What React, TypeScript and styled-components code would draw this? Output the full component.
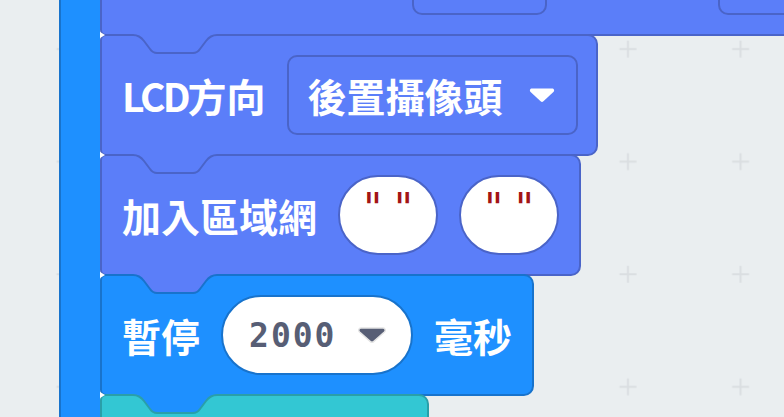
import React from "react";
import styled, { createGlobalStyle } from "styled-components";

const C = {
  bg: "#eaeef0",
  grid: "#dadee1",
  purple: "#5b7ef9",
  purpleDark: "#4a64c8",
  blue: "#1e90ff",
  blueDark: "#1873cc",
  teal: "#33c7d3",
  tealDark: "#2a9fa9",
  text: "#575e75",
  quote: "#a31515",
};

const GlobalStyle = createGlobalStyle`
  html, body { margin: 0; padding: 0; background: ${C.bg}; }
  body { font-family: "Noto Sans CJK TC", "Noto Sans", sans-serif; }
`;

const Workspace = styled.div`
  position: relative;
  width: 784px;
  height: 417px;
  overflow: hidden;
  background: ${C.bg};
`;

const GridLayer = styled.svg`
  position: absolute;
  inset: 0;
  width: 100%;
  height: 100%;
`;

/* the scrolled block canvas */
const Canvas = styled.div`
  position: relative;
  display: flex;
  padding-left: 59px;
  margin-top: -84px;
`;

const CBlock = styled.div`
  display: flex;
  align-items: stretch;
`;

const Arm = styled.div`
  flex: none;
  box-sizing: border-box;
  width: 41px;
  background: ${C.blue};
  border-left: 2px solid ${C.blueDark};
`;

const Statements = styled.div`
  display: flex;
  flex-direction: column;
  align-items: flex-start;
`;

const Block = styled.div<{
  $fill: string;
  $stroke: string;
  $width: number;
  $lead?: number;
  $gap?: number;
}>`
  position: relative;
  flex: none;
  box-sizing: border-box;
  width: ${(p) => p.$width}px;
  height: 122px;
  margin-top: -2px;
  display: flex;
  align-items: center;
  gap: ${(p) => p.$gap ?? 21}px;
  padding-left: ${(p) => p.$lead ?? 20}px;
  background: ${(p) => p.$fill};
  border: 2px solid ${(p) => p.$stroke};
  border-radius: 6px 10px 10px 6px;
`;

const NotchSvg = styled.svg`
  position: absolute;
  left: -2px;
  top: -6px;
  width: 130px;
  height: 30px;
  overflow: visible;
  pointer-events: none;
`;

const Label = styled.span`
  font: 700 39px "Noto Sans CJK TC", "Noto Sans", sans-serif;
  color: #ffffff;
  line-height: 1;
  white-space: nowrap;
`;

const Latin = styled.span`
  letter-spacing: -3px;
`;

const Dropdown = styled.div<{ $stroke: string; $width: number }>`
  flex: none;
  box-sizing: border-box;
  width: ${(p) => p.$width}px;
  height: 80px;
  border: 2px solid ${(p) => p.$stroke};
  border-radius: 10px;
  display: flex;
  align-items: center;
  justify-content: space-between;
  padding: 0 21px 0 19px;
`;

const Pill = styled.div<{ $stroke: string; $width: number }>`
  flex: none;
  box-sizing: border-box;
  width: ${(p) => p.$width}px;
  height: 80px;
  border-radius: 40px;
  background: #ffffff;
  border: 2px solid ${(p) => p.$stroke};
  display: flex;
  align-items: center;
`;

const StringPill = styled(Pill)`
  align-items: flex-start;
  justify-content: center;
  padding-top: 11px;
  gap: 12px;
`;

const NumberPill = styled(Pill)`
  padding-left: 26px;
  gap: 20px;
`;

const Quote = styled.span`
  font: 400 41px "DejaVu Sans", sans-serif;
  color: ${C.quote};
  line-height: 1;
`;

const NumberText = styled.span`
  font: 700 33px "DejaVu Sans Mono", monospace;
  letter-spacing: 2px;
  color: ${C.text};
  line-height: 1;
`;

const ArrowSvg = styled.svg`
  flex: none;
  display: block;
`;

const NOTCH =
  "M33,5 C38,5 41,7 44,11 L50,19 C52,22 54,23 57,23 L93,23 C96,23 98,22 100,19 L106,11 C109,7 112,5 117,5";

function Notch({ prevFill, stroke }: { prevFill: string; stroke: string }) {
  return (
    <NotchSvg viewBox="0 0 130 30">
      <path d={NOTCH + " L117,4 L33,4 Z"} fill={prevFill} />
      <path d={NOTCH} fill="none" stroke={stroke} strokeWidth={2} />
      <path d="M0,2 L5,5 L0,8 Z" fill="#ffffff" />
    </NotchSvg>
  );
}

function WhiteArrow() {
  return (
    <ArrowSvg width="26" height="16" viewBox="0 0 26 16">
      <path
        d="M3 1.5 H23 C25 1.5 25.8 3.6 24.4 5 L14.4 14.2 C13.4 15.1 12.6 15.1 11.6 14.2 L1.6 5 C0.2 3.6 1 1.5 3 1.5 Z"
        fill="#ffffff"
      />
    </ArrowSvg>
  );
}

function DarkArrow() {
  return (
    <ArrowSvg width="30" height="18" viewBox="0 0 30 18">
      <path
        d="M4 2 H26 C28.2 2 29 4.4 27.4 6 L16.6 15.6 C15.6 16.5 14.4 16.5 13.4 15.6 L2.6 6 C1 4.4 1.8 2 4 2 Z"
        fill={C.text}
        stroke="#e4e4e4"
        strokeWidth={1.5}
      />
    </ArrowSvg>
  );
}

function EmptyString() {
  return (
    <StringPill $stroke={C.purpleDark} $width={100}>
      <Quote>"</Quote>
      <Quote>"</Quote>
    </StringPill>
  );
}

export default function App() {
  return (
    <>
      <GlobalStyle />
      <Workspace>
        <GridLayer>
          <defs>
            <pattern
              id="ws-grid"
              width="112.6"
              height="112.6"
              patternUnits="userSpaceOnUse"
            >
              <path
                d="M56.5,49 H73.5 M65,40.5 V57.5"
                stroke={C.grid}
                strokeWidth={2}
                fill="none"
              />
            </pattern>
          </defs>
          <rect width="100%" height="100%" fill="url(#ws-grid)" />
        </GridLayer>

        <Canvas>
          <CBlock>
            <Arm />
            <Statements>
              <Block
                $fill={C.purple}
                $stroke={C.purpleDark}
                $width={800}
                $lead={310}
                $gap={171}
              >
                <Dropdown $stroke={C.purpleDark} $width={135} />
                <Dropdown $stroke={C.purpleDark} $width={200} />
              </Block>

              <Block $fill={C.purple} $stroke={C.purpleDark} $width={498}>
                <Notch prevFill={C.purple} stroke={C.purpleDark} />
                <Label>
                  <Latin>LCD</Latin>方向
                </Label>
                <Dropdown $stroke={C.purpleDark} $width={291}>
                  <Label>後置攝像頭</Label>
                  <WhiteArrow />
                </Dropdown>
              </Block>

              <Block $fill={C.purple} $stroke={C.purpleDark} $width={481}>
                <Notch prevFill={C.purple} stroke={C.purpleDark} />
                <Label>加入區域網</Label>
                <EmptyString />
                <EmptyString />
              </Block>

              <Block $fill={C.blue} $stroke={C.blueDark} $width={434}>
                <Notch prevFill={C.purple} stroke={C.blueDark} />
                <Label>暫停</Label>
                <NumberPill $stroke={C.blueDark} $width={192}>
                  <NumberText>2000</NumberText>
                  <DarkArrow />
                </NumberPill>
                <Label>毫秒</Label>
              </Block>

              <Block $fill={C.teal} $stroke={C.tealDark} $width={329}>
                <Notch prevFill={C.blue} stroke={C.tealDark} />
              </Block>
            </Statements>
          </CBlock>
        </Canvas>
      </Workspace>
    </>
  );
}
